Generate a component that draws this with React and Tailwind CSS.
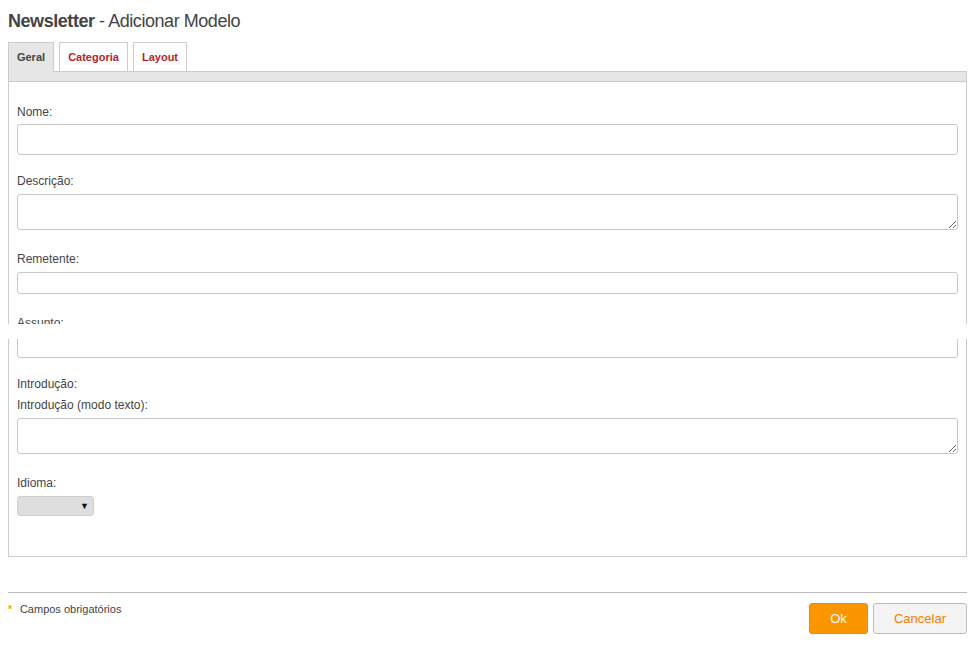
import React from "react";

const Label = ({ children, className = "" }) => (
  <div className={`text-[12px] leading-[18px] text-[#444] ${className}`}>{children}</div>
);

const inputCls =
  "block w-full rounded-[3px] border border-[#c8c8c8] bg-white outline-none";

export default function App() {
  return (
    <div className="relative min-h-[669px] bg-white px-2 font-['Liberation_Sans',Arial,sans-serif] text-[#444]">
      {/* Title */}
      <h1 className="pt-[10px] text-[18px] leading-[22px] tracking-[-0.45px] text-[#444]">
        <span className="font-bold">Newsletter</span> - Adicionar Modelo
      </h1>

      {/* Tabs */}
      <div className="mt-[10px] flex items-end gap-[5px]">
        <div className="relative z-10 -mb-px flex h-[30px] w-[46px] items-center justify-center border border-b-0 border-[#ccc] bg-[#e6e6e6] pb-px text-[11px] font-bold text-[#444]">
          Geral
        </div>
        <div className="flex h-[29px] w-[69px] items-center justify-center border border-b-0 border-[#ccc] bg-white text-[11px] font-bold text-[#b3262b]">
          Categoria
        </div>
        <div className="flex h-[29px] w-[54px] items-center justify-center border border-b-0 border-[#ccc] bg-white text-[11px] font-bold text-[#b3262b]">
          Layout
        </div>
      </div>

      {/* Panel */}
      <div className="border border-[#ccc]">
        <div className="h-[10px] border-b border-[#ccc] bg-[#e6e6e6]" />
        <div className="px-2 pt-[21px] pb-[40px]">
          <Label>Nome:</Label>
          <input className={`${inputCls} mt-[3px] h-[31px]`} />

          <Label className="mt-[17px]">Descrição:</Label>
          <textarea className={`${inputCls} mt-[4px] h-[36px] resize-y`} />

          <Label className="mt-[20px]">Remetente:</Label>
          <input className={`${inputCls} mt-[4px] h-[22px]`} />

          <Label className="mt-[20px]">Assunto:</Label>
          <input className={`${inputCls} mt-[4px] h-[22px]`} />

          <Label className="mt-[17px]">Introdução:</Label>
          <Label className="mt-[3px]">Introdução (modo texto):</Label>
          <textarea className={`${inputCls} mt-[4px] h-[36px] resize-y`} />

          <Label className="mt-[20px]">Idioma:</Label>
          <div className="mt-[4px] flex h-[20px] w-[77px] items-center justify-end rounded-[3px] border border-[#cfcfcf] bg-[#dedede] pr-[4px] text-[9px] leading-none text-[#111]">
            ▼
          </div>
        </div>
      </div>

      {/* Footer */}
      <div className="mt-[35px] border-t border-[#bbb] pt-[10px]">
        <div className="flex items-start justify-between">
          <div className="flex items-start text-[11px] leading-[13px] text-[#444]">
            <span className="mr-[8px] mt-[2px] text-[10px] font-bold leading-[10px] text-[#f5a200]">*</span>
            Campos obrigatórios
          </div>
          <div className="flex gap-[5px]">
            <button className="h-[31px] w-[59px] rounded-[3px] border border-[#f08a00] bg-[#fb9600] text-[13px] text-white">
              Ok
            </button>
            <button className="h-[31px] w-[94px] rounded-[3px] border border-[#bbb] bg-[#f4f4f4] text-[13px] text-[#fb7c00]">
              Cancelar
            </button>
          </div>
        </div>
      </div>

      {/* rendering glitch band seen in the capture */}
      <div className="absolute left-0 right-0 top-[324px] h-[15px] bg-white" />
    </div>
  );
}
